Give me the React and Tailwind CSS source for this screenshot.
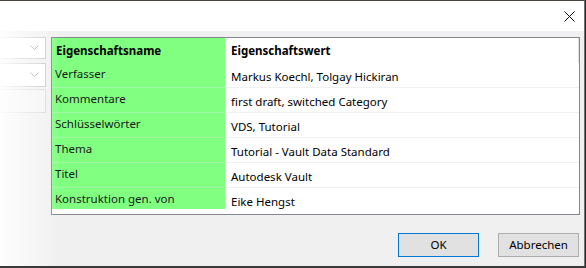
import React from "react";

const rows = [
  ["Verfasser", "Markus Koechl, Tolgay Hickiran"],
  ["Kommentare", "first draft, switched Category"],
  ["Schlüsselwörter", "VDS, Tutorial"],
  ["Thema", "Tutorial - Vault Data Standard"],
  ["Titel", "Autodesk Vault"],
  ["Konstruktion gen. von", "Eike Hengst"],
];

const Chevron = () => (
  <svg width="9" height="6" viewBox="0 0 9 6" className="mr-[6px]">
    <path d="M0.5 0.5 L4.5 4.5 L8.5 0.5" fill="none" stroke="#a0a0a0" strokeWidth="1" />
  </svg>
);

export default function App() {
  return (
    <div
      className="w-[586px] h-[268px] bg-[#2a2a2a] flex flex-col overflow-hidden text-[11.5px] text-black"
      style={{ fontFamily: '"Noto Sans", "Open Sans", sans-serif' }}
    >
      <div className="h-px bg-[#4a4440] shrink-0" />
      <div className="w-[585px] flex-1 flex flex-col border-r border-[#6f6f6f]">
        {/* title bar */}
        <div className="h-[30px] bg-white flex items-center justify-end pr-[9px] shrink-0">
          <svg width="11" height="11" viewBox="0 0 11 11">
            <path d="M0.5 0.5 L10.5 10.5 M10.5 0.5 L0.5 10.5" stroke="#111" strokeWidth="1" />
          </svg>
        </div>

        {/* body */}
        <div className="relative flex-1 bg-[#f0f0f0] flex flex-col">
          <div className="flex pt-[6px]">
            <div className="w-[46px] flex flex-col">
              <div className="h-[22px] bg-white border-y border-r border-[#c8c8c8] flex items-center justify-end">
                <Chevron />
              </div>
              <div className="mt-[4px] h-[24px] bg-white border-y border-r border-[#c8c8c8] flex items-center justify-end">
                <Chevron />
              </div>
              <div className="mt-[2px] h-[24px] bg-[#f4f4f4] border-y border-r border-[#d8d8d8]" />
            </div>

            <div className="ml-[5px] w-[529px] h-[178px] border border-[#828790] bg-white">
              <div className="grid grid-cols-[174px_1fr]">
                <div className="h-[25px] bg-[#80ff80] border-r border-[#e8e8e8] pl-[4px] font-bold flex items-center">
                  Eigenschaftsname
                </div>
                <div className="h-[25px] pl-[5px] font-bold flex items-center border-r border-[#e0e0e0]">
                  Eigenschaftswert
                </div>
                {rows.map(([k, v], i) => (
                  <React.Fragment key={k}>
                    <div
                      className={`${i === rows.length - 1 ? "h-[21px]" : "h-[25px] border-b border-[#a4f4a4]"} bg-[#80ff80] border-r border-r-[#e8e8e8] pl-[3px] pt-[3px] text-[#1a1a1a] leading-[16px]`}
                    >
                      {k}
                    </div>
                    <div
                      className={`${i === rows.length - 1 ? "h-[21px]" : "h-[25px] border-b border-[#f0f0f0]"} pl-[5px] pt-[6px] leading-[16px]`}
                    >
                      {v}
                    </div>
                  </React.Fragment>
                ))}
              </div>
            </div>
          </div>

          <div className="flex justify-end gap-[19px] pr-[5px] mt-[18px]">
            <button className="w-[81px] h-[24px] bg-[#e1e1e1] border border-[#0078d7] flex items-center justify-center">
              OK
            </button>
            <button className="w-[81px] h-[24px] bg-[#e1e1e1] border border-[#adadad] flex items-center justify-center">
              Abbrechen
            </button>
          </div>

          <div className="absolute left-0 top-0 bottom-0 w-[60px] bg-linear-to-r from-white/90 to-transparent pointer-events-none" />
        </div>
      </div>
      <div className="h-[2px] bg-[#3a3a3a] shrink-0" />
    </div>
  );
}
